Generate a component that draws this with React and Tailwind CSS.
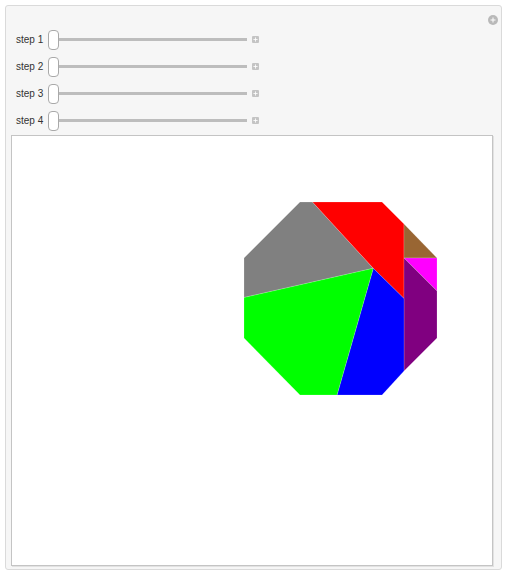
import React from "react";

const OX = 12;
const OY = 136;

// piece outlines in page coordinates
const C = [373.3, 268.3];
const PIECES = [
  { fill: "#808080", pts: [[244, 297.5], [244, 258], [300, 202], [312.5, 202], C] },
  { fill: "#ff0000", pts: [[312.5, 202], [382, 202], [404, 224], [404, 298.5], C] },
  { fill: "#996633", pts: [[404, 224], [437, 258], [404, 258]] },
  { fill: "#ff00ff", pts: [[404, 258], [437, 258], [437, 291]] },
  { fill: "#800080", pts: [[404, 258], [437, 291], [437, 338], [404, 371]] },
  { fill: "#0000ff", pts: [C, [404, 298.5], [404, 371], [382, 395], [337, 395]] },
  { fill: "#00ff00", pts: [C, [337, 395], [300, 395], [244, 338], [244, 297.5]] },
];

function toPoints(pts) {
  return pts.map(([x, y]) => `${x - OX},${y - OY}`).join(" ");
}

export default function App() {
  return (
    <div className="p-[5px] bg-white font-['Liberation_Sans',Arial,sans-serif]">
      <div className="relative w-[497px] h-[565px] bg-[#f6f6f6] border border-[#dadada] rounded-[3px] pt-[20px] pl-[5px] pr-[9px] flex flex-col">
        {/* top-right toggle */}
        <div className="absolute top-[9px] right-[3px] w-[10px] h-[10px] rounded-full bg-[#b9b9b9] flex items-center justify-center">
          <PlusGlyph size={6} />
        </div>

        {/* controls */}
        <div className="flex flex-col pl-[5px] mb-[1px]">
          {["step 1", "step 2", "step 3", "step 4"].map((label) => (
            <SliderRow key={label} label={label} />
          ))}
        </div>

        {/* graphic */}
        <div className="w-[482px] h-[431px] bg-white border border-[#c4c4c4] shadow-[1px_1px_0_#e2e2e2]">
          <svg width="480" height="429" viewBox="0 0 480 429">
            {PIECES.map((p, i) => (
              <polygon
                key={i}
                points={toPoints(p.pts)}
                fill={p.fill}
                stroke="#ffffff"
                strokeOpacity="0.35"
                strokeWidth="0.5"
                strokeLinejoin="round"
              />
            ))}
          </svg>
        </div>
      </div>
    </div>
  );
}

function SliderRow({ label }) {
  return (
    <div className="h-[27px] flex items-center">
      <span className="w-[32px] text-[10px] text-[#333333] leading-none">{label}</span>
      <div className="w-[11px] h-[20px] rounded-[4px] border border-[#a9a9a9] bg-white shrink-0" />
      <div className="w-[188px] h-[3px] bg-[#bdbdbd]" />
      <div className="ml-[5px] w-[7px] h-[7px] bg-[#c4c4c4] rounded-[1px] flex items-center justify-center">
        <PlusGlyph size={5} />
      </div>
    </div>
  );
}

function PlusGlyph({ size }) {
  return (
    <svg width={size} height={size} viewBox="0 0 6 6">
      <rect x="2.5" y="0.5" width="1" height="5" fill="#ffffff" />
      <rect x="0.5" y="2.5" width="5" height="1" fill="#ffffff" />
    </svg>
  );
}
